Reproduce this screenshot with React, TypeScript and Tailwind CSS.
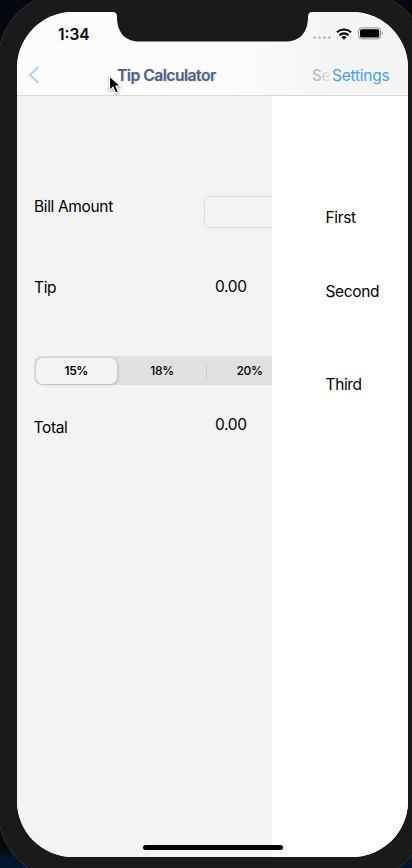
function StatusBar() {
  return (
    <div className="relative flex h-[43px] shrink-0 items-start justify-between pl-[41px] pr-[24px]">
      <span className="mt-[13px] text-[15.5px] leading-[20px] font-semibold tracking-[0px]">1:34</span>
      <div className="mt-[15px] flex items-start">
        <div className="mr-[5px] mt-[9px] flex gap-[2px]">
          <i className="size-[3px] rounded-full bg-[#bdbdbd]" />
          <i className="size-[3px] rounded-full bg-[#bdbdbd]" />
          <i className="size-[3px] rounded-full bg-[#bdbdbd]" />
          <i className="size-[3px] rounded-full bg-[#bdbdbd]" />
        </div>
        <svg className="mt-[1px]" width="16" height="12" viewBox="0 0 16 12" fill="none" stroke="#000" strokeWidth="2.1">
          <path d="M1 4.300a10.200 10.200 0 0 1 14 0" />
          <path d="M3.500 7.200a6.400 6.400 0 0 1 9 0" />
          <path d="M8 11.700 5.400 9.200a3.700 3.700 0 0 1 5.200 0z" fill="#000" stroke="none" />
        </svg>
        <svg className="ml-[6px]" width="26" height="13" viewBox="0 0 26 13">
          <rect x="0.6" y="0.9" width="22" height="11" rx="3" fill="none" stroke="#8f8f8f" />
          <rect x="2" y="2.3" width="19.2" height="8.2" rx="1.6" />
          <path d="M23.800 4.600c1.400.6 1.400 3 0 3.600z" fill="#8f8f8f" />
        </svg>
      </div>
      <svg className="absolute left-[93px] top-0" width="206" height="31" viewBox="0 0 206 31">
        <path d="M0 0H3C5.500 0 7 1.500 7 5C7 20 15 29.500 29 29.500H176C190 29.500 198 20 198 5C198 1.500 199.500 0 202 0Z" fill="#1a1a1a" />
      </svg>
    </div>
  )
}

function NavBar() {
  return (
    <div className="flex h-[41px] shrink-0 items-start border-b border-[#d9d9da]">
      <svg className="ml-[11px] mt-[10px]" width="13" height="20" viewBox="0 0 13 20" fill="none" stroke="#add2f6" strokeWidth="2.1">
        <path d="M10.500 2 2 10l8.500 8" />
      </svg>
      <h1 className="ml-[76px] mt-[11px] w-[195px] whitespace-nowrap text-[15.5px] leading-[20px] font-semibold tracking-[-0.42px] text-[#536077] [text-shadow:1px_0_1px_#a9cff5]">
        Tip Calculator
      </h1>
      <span className="mt-[11px] w-[20px] bg-linear-to-r from-[#b7b7ba] from-30% to-[#ededee] to-95% bg-clip-text text-[15.5px] leading-[20px] font-medium tracking-[-0.5px] text-transparent">
        Se
      </span>
      <span className="mt-[11px] whitespace-nowrap text-[15.5px] leading-[20px] tracking-[-0.25px] text-[#499dfa]">Settings</span>
    </div>
  )
}

function Calculator() {
  return (
    <section className="flex w-[255px] shrink-0 flex-col overflow-hidden bg-[#f3f3f3]">
      <div className="mt-[100px] flex h-[32px] shrink-0 pl-[17px]">
        <label className="mt-[1px] w-[170px] shrink-0 leading-[20px]">Bill Amount</label>
        <div className="h-[32px] w-[180px] shrink-0 rounded-[5px] border border-[#dcdcdc]" />
      </div>
      <div className="mt-[49px] flex h-[22px] shrink-0 pl-[17px] leading-[20px]">
        <span className="mt-[1px] w-[181px]">Tip</span>
        <span>0.00</span>
      </div>
      <div className="ml-[17px] mt-[57px] flex h-[29px] w-[350px] shrink-0 items-center rounded-[8px] bg-[#e0e0e1] text-center text-[12px] leading-[16px] font-medium">
        <div className="ml-[1.500px] flex h-[26px] w-[81.500px] items-center justify-center rounded-[7px] bg-[#f3f3f3] font-semibold shadow-[0_0_2px_1px_rgba(0,0,0,0.08),1px_1px_3px_rgba(0,0,0,0.1)]">15%</div>
        <div className="w-[89px] pl-[1px]">18%</div>
        <div className="h-[16px] w-px bg-[#cbcbcf]" />
        <div className="w-[85px]">20%</div>
      </div>
      <div className="mt-[30px] flex h-[24px] shrink-0 pl-[17px] leading-[20px]">
        <span className="-ml-[0.500px] mt-[3px] w-[181.500px]">Total</span>
        <span>0.00</span>
      </div>
    </section>
  )
}

function SettingsPanel() {
  return (
    <section className="flex grow flex-col items-start bg-white pl-[53.500px] leading-[20px]">
      <span className="mt-[112px]">First</span>
      <span className="mt-[54px]">Second</span>
      <span className="mt-[73px]">Third</span>
    </section>
  )
}

export default function App() {
  return (
    <div className="h-[868px] w-[412px] overflow-hidden bg-linear-to-b from-[#06080f] from-98% to-[#03182e] to-99%">
      <div className="-ml-[2px] -mt-[8px] flex h-[888px] w-[430px] rounded-[68px] border border-[#333436] bg-[#1a1a1a] pl-[18px] pt-[19px]">
        <main className="relative flex h-[845px] w-[391px] flex-col overflow-hidden rounded-[56px] bg-white font-['Inter','Liberation_Sans',sans-serif] text-[15.500px] tracking-[-0.350px] text-black">
          <header className="shrink-0 bg-linear-to-r from-[#fcfcfc] from-55% to-[#f5f5f6] to-80%">
            <StatusBar />
            <NavBar />
          </header>
          <div className="flex grow">
            <Calculator />
            <SettingsPanel />
          </div>
          <div className="absolute bottom-[7px] left-[125.500px] h-[5px] w-[140.500px] rounded-full bg-black" />
        </main>
      </div>
      <svg className="fixed left-[108px] top-[74px] drop-shadow-[0_1px_1px_rgba(0,0,0,0.35)]" width="14" height="21" viewBox="0 0 14 21">
        <path d="M1.500 2v14.500l3.500-3.200 2.500 5.700 3-1.300-2.500-5.500h4.800z" fill="#000" stroke="#fff" strokeWidth="1.200" />
      </svg>
    </div>
  )
}
